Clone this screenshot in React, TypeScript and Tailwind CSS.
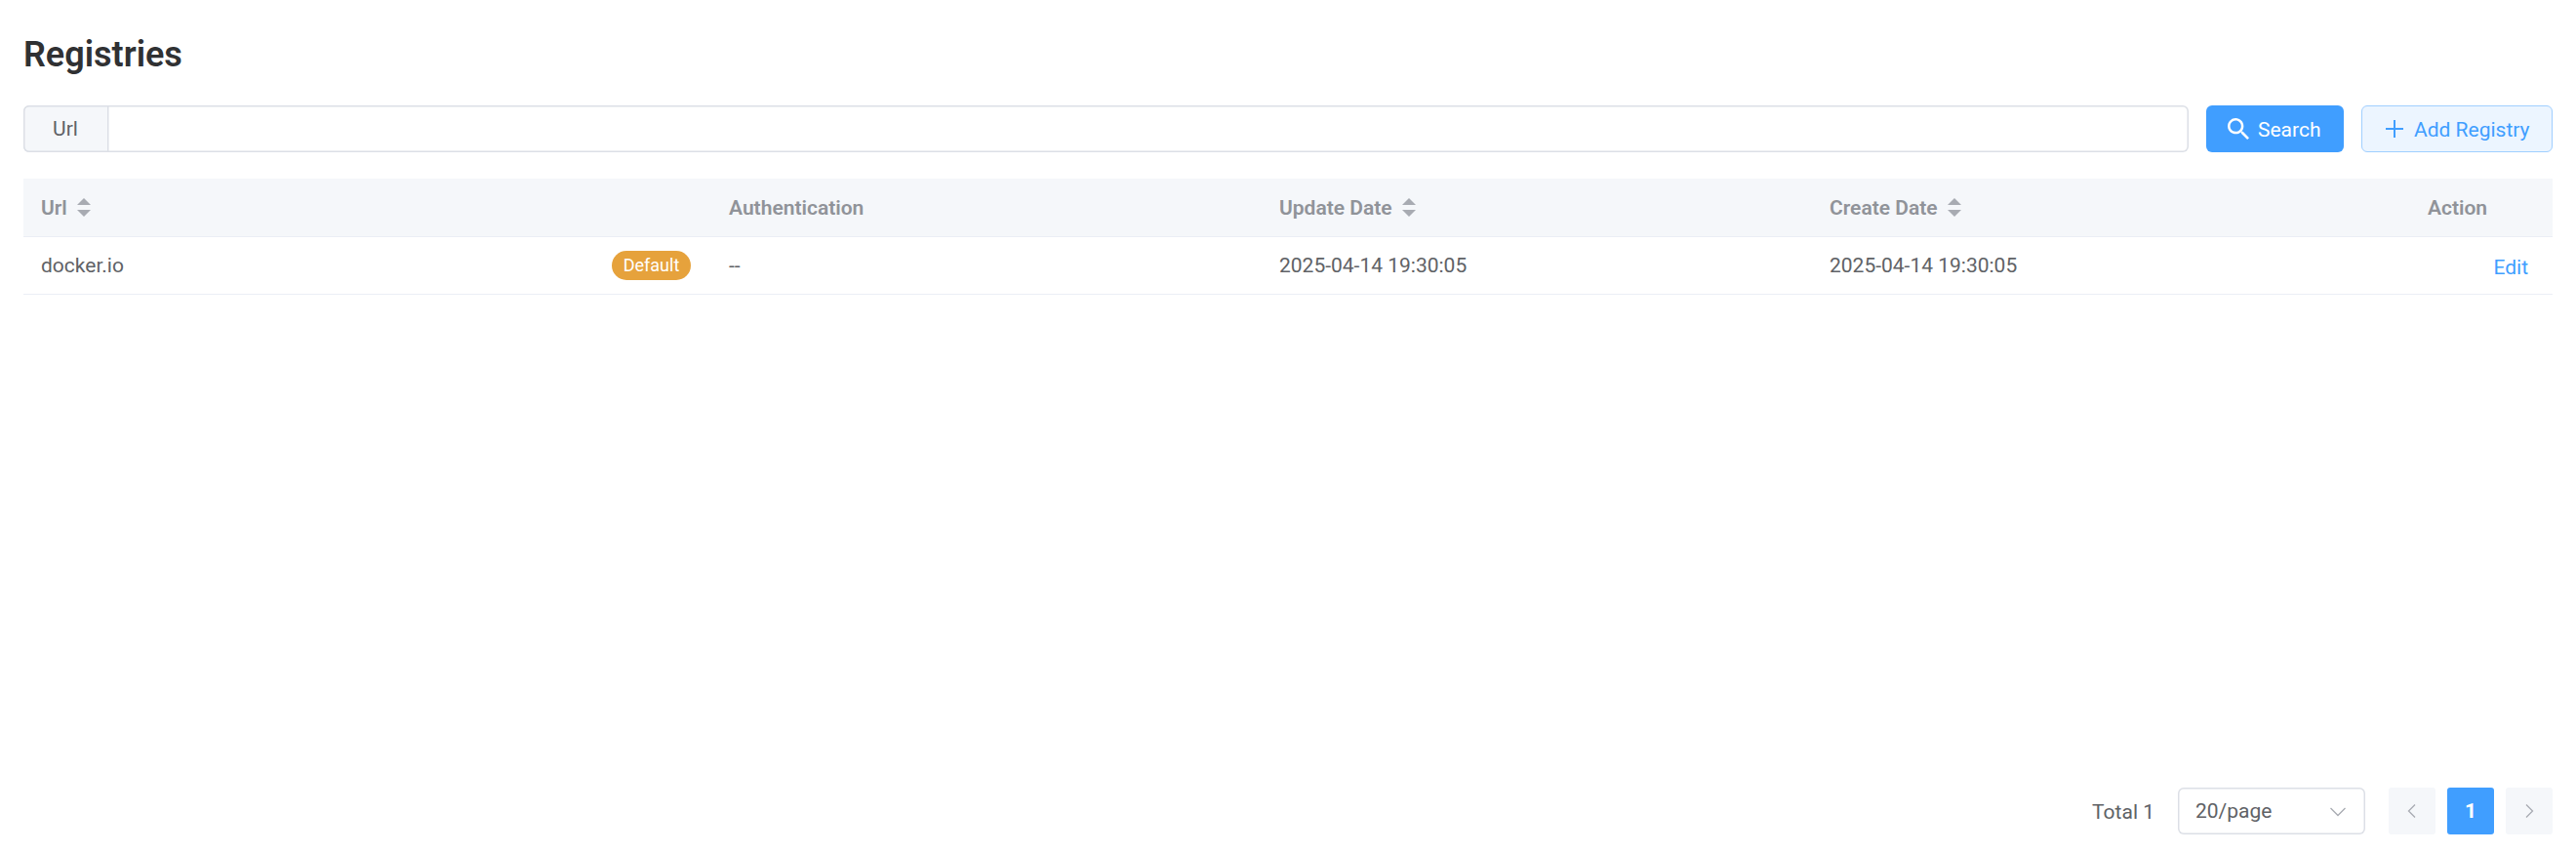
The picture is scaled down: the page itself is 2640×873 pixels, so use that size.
import React from "react";

function SortCarets() {
  return (
    <svg width="14" height="19" viewBox="0 0 14 19" className="ml-[10px] shrink-0" fill="#a8abb2">
      <path d="M0 7 7 0l7 7z" />
      <path d="M0 12h14l-7 7z" />
    </svg>
  );
}

function HeaderCell({ label, sortable }: { label: string; sortable?: boolean }) {
  return (
    <div className="flex items-center px-[18px]">
      <span>{label}</span>
      {sortable && <SortCarets />}
    </div>
  );
}

function SearchIcon() {
  return (
    <svg width="22" height="22" viewBox="3 3 17.49 17.49" fill="currentColor">
      <path d="M15.5 14h-.79l-.28-.27C15.41 12.59 16 11.11 16 9.5 16 5.91 13.09 3 9.5 3S3 5.91 3 9.5 5.91 16 9.5 16c1.61 0 3.09-.59 4.23-1.57l.27.28v.79l5 4.99L20.49 19l-4.99-5zm-6 0C7.01 14 5 11.99 5 9.5S7.01 5 9.5 5 14 7.01 14 9.5 11.99 14 9.5 14z" />
    </svg>
  );
}

function Chevron({ d }: { d: string }) {
  return (
    <svg width="18" height="18" viewBox="0 0 18 18" fill="none" stroke="#a8abb2" strokeWidth="1.3">
      <path d={d} />
    </svg>
  );
}

const columns = "grid grid-cols-[705px_564px_564px_1fr]";

export default function App() {
  return (
    <div className="flex h-[873px] w-[2640px] flex-col bg-white px-6 pb-[18px] font-['Roboto',sans-serif] text-[21px] leading-[30px] text-[#606266]">
      <h1 className="mt-[31px] h-[49px] text-[36px] leading-[50px] font-semibold text-[#303133]">Registries</h1>

      <div className="mt-7 flex h-12 gap-[18px]">
        <label className="flex w-[2219px]">
          <span className="flex w-[86px] items-center justify-center rounded-l-[6px] bg-[#f5f7fa] shadow-[inset_1.5px_0_0_0_#dcdfe6,inset_0_1.5px_0_0_#dcdfe6,inset_0_-1.5px_0_0_#dcdfe6]">Url</span>
          <input className="min-w-0 flex-1 rounded-r-[6px] px-4 shadow-[inset_0_0_0_1.5px_#dcdfe6] outline-none" />
        </label>
        <button className="flex w-[141px] items-center rounded-[6px] bg-[#409eff] pl-[22px] text-white">
          <SearchIcon />
          <span className="ml-[9px] pt-[2px]">Search</span>
        </button>
        <button className="flex w-[196px] items-center rounded-[6px] border border-[#a0cfff] bg-[#ecf5ff] pl-6 text-[#409eff]">
          <svg width="18" height="18" viewBox="0 0 18 18" stroke="currentColor" strokeWidth="2">
            <path d="M9 0v18M0 9h18" />
          </svg>
          <span className="ml-[11px] pt-[2px] whitespace-nowrap">Add Registry</span>
        </button>
      </div>

      <div className="mt-[27px]">
        <div className={`${columns} h-[60px] border-b border-[#ebeef5] bg-[#f5f7fa] font-semibold text-[#909399]`}>
          <HeaderCell label="Url" sortable />
          <HeaderCell label="Authentication" />
          <HeaderCell label="Update Date" sortable />
          <div className="flex justify-between">
            <HeaderCell label="Create Date" sortable />
            <div className="flex w-[195px] items-center justify-center">Action</div>
          </div>
        </div>
        <div className={`${columns} h-[59px] items-center border-b border-[#ebeef5]`}>
          <div className="flex items-center justify-between pr-[21px] pl-[18px]">
            <span>docker.io</span>
            <span className="flex h-[30px] w-[81px] items-center justify-center rounded-full bg-[#e6a23c] text-[18px] text-white">Default</span>
          </div>
          <div className="px-[18px]">--</div>
          <div className="px-[18px]">2025-04-14 19:30:05</div>
          <div className="flex items-center justify-between pr-[25px] pl-[18px]">
            <span>2025-04-14 19:30:05</span>
            <a className="pt-1 text-[#409eff]">Edit</a>
          </div>
        </div>
      </div>

      <div className="mt-auto flex h-12 items-center justify-end">
        <span className="mr-6 pt-[2px]">Total 1</span>
        <div className="mr-6 flex h-12 w-48 items-center justify-between rounded-[6px] pr-[19px] pl-[18px] shadow-[inset_0_0_0_1.5px_#dcdfe6]">
          <span>20/page</span>
          <Chevron d="M1.5 6 9 13.5 16.5 6" />
        </div>
        <div className="flex gap-3">
          <button className="flex size-12 items-center justify-center rounded-[3px] bg-[#f5f7fa]">
            <Chevron d="M12 2.5 5.5 9 12 15.5" />
          </button>
          <button className="flex size-12 items-center justify-center rounded-[3px] bg-[#409eff] font-bold text-white">1</button>
          <button className="flex size-12 items-center justify-center rounded-[3px] bg-[#f5f7fa]">
            <Chevron d="M6 2.5 12.5 9 6 15.5" />
          </button>
        </div>
      </div>
    </div>
  );
}
